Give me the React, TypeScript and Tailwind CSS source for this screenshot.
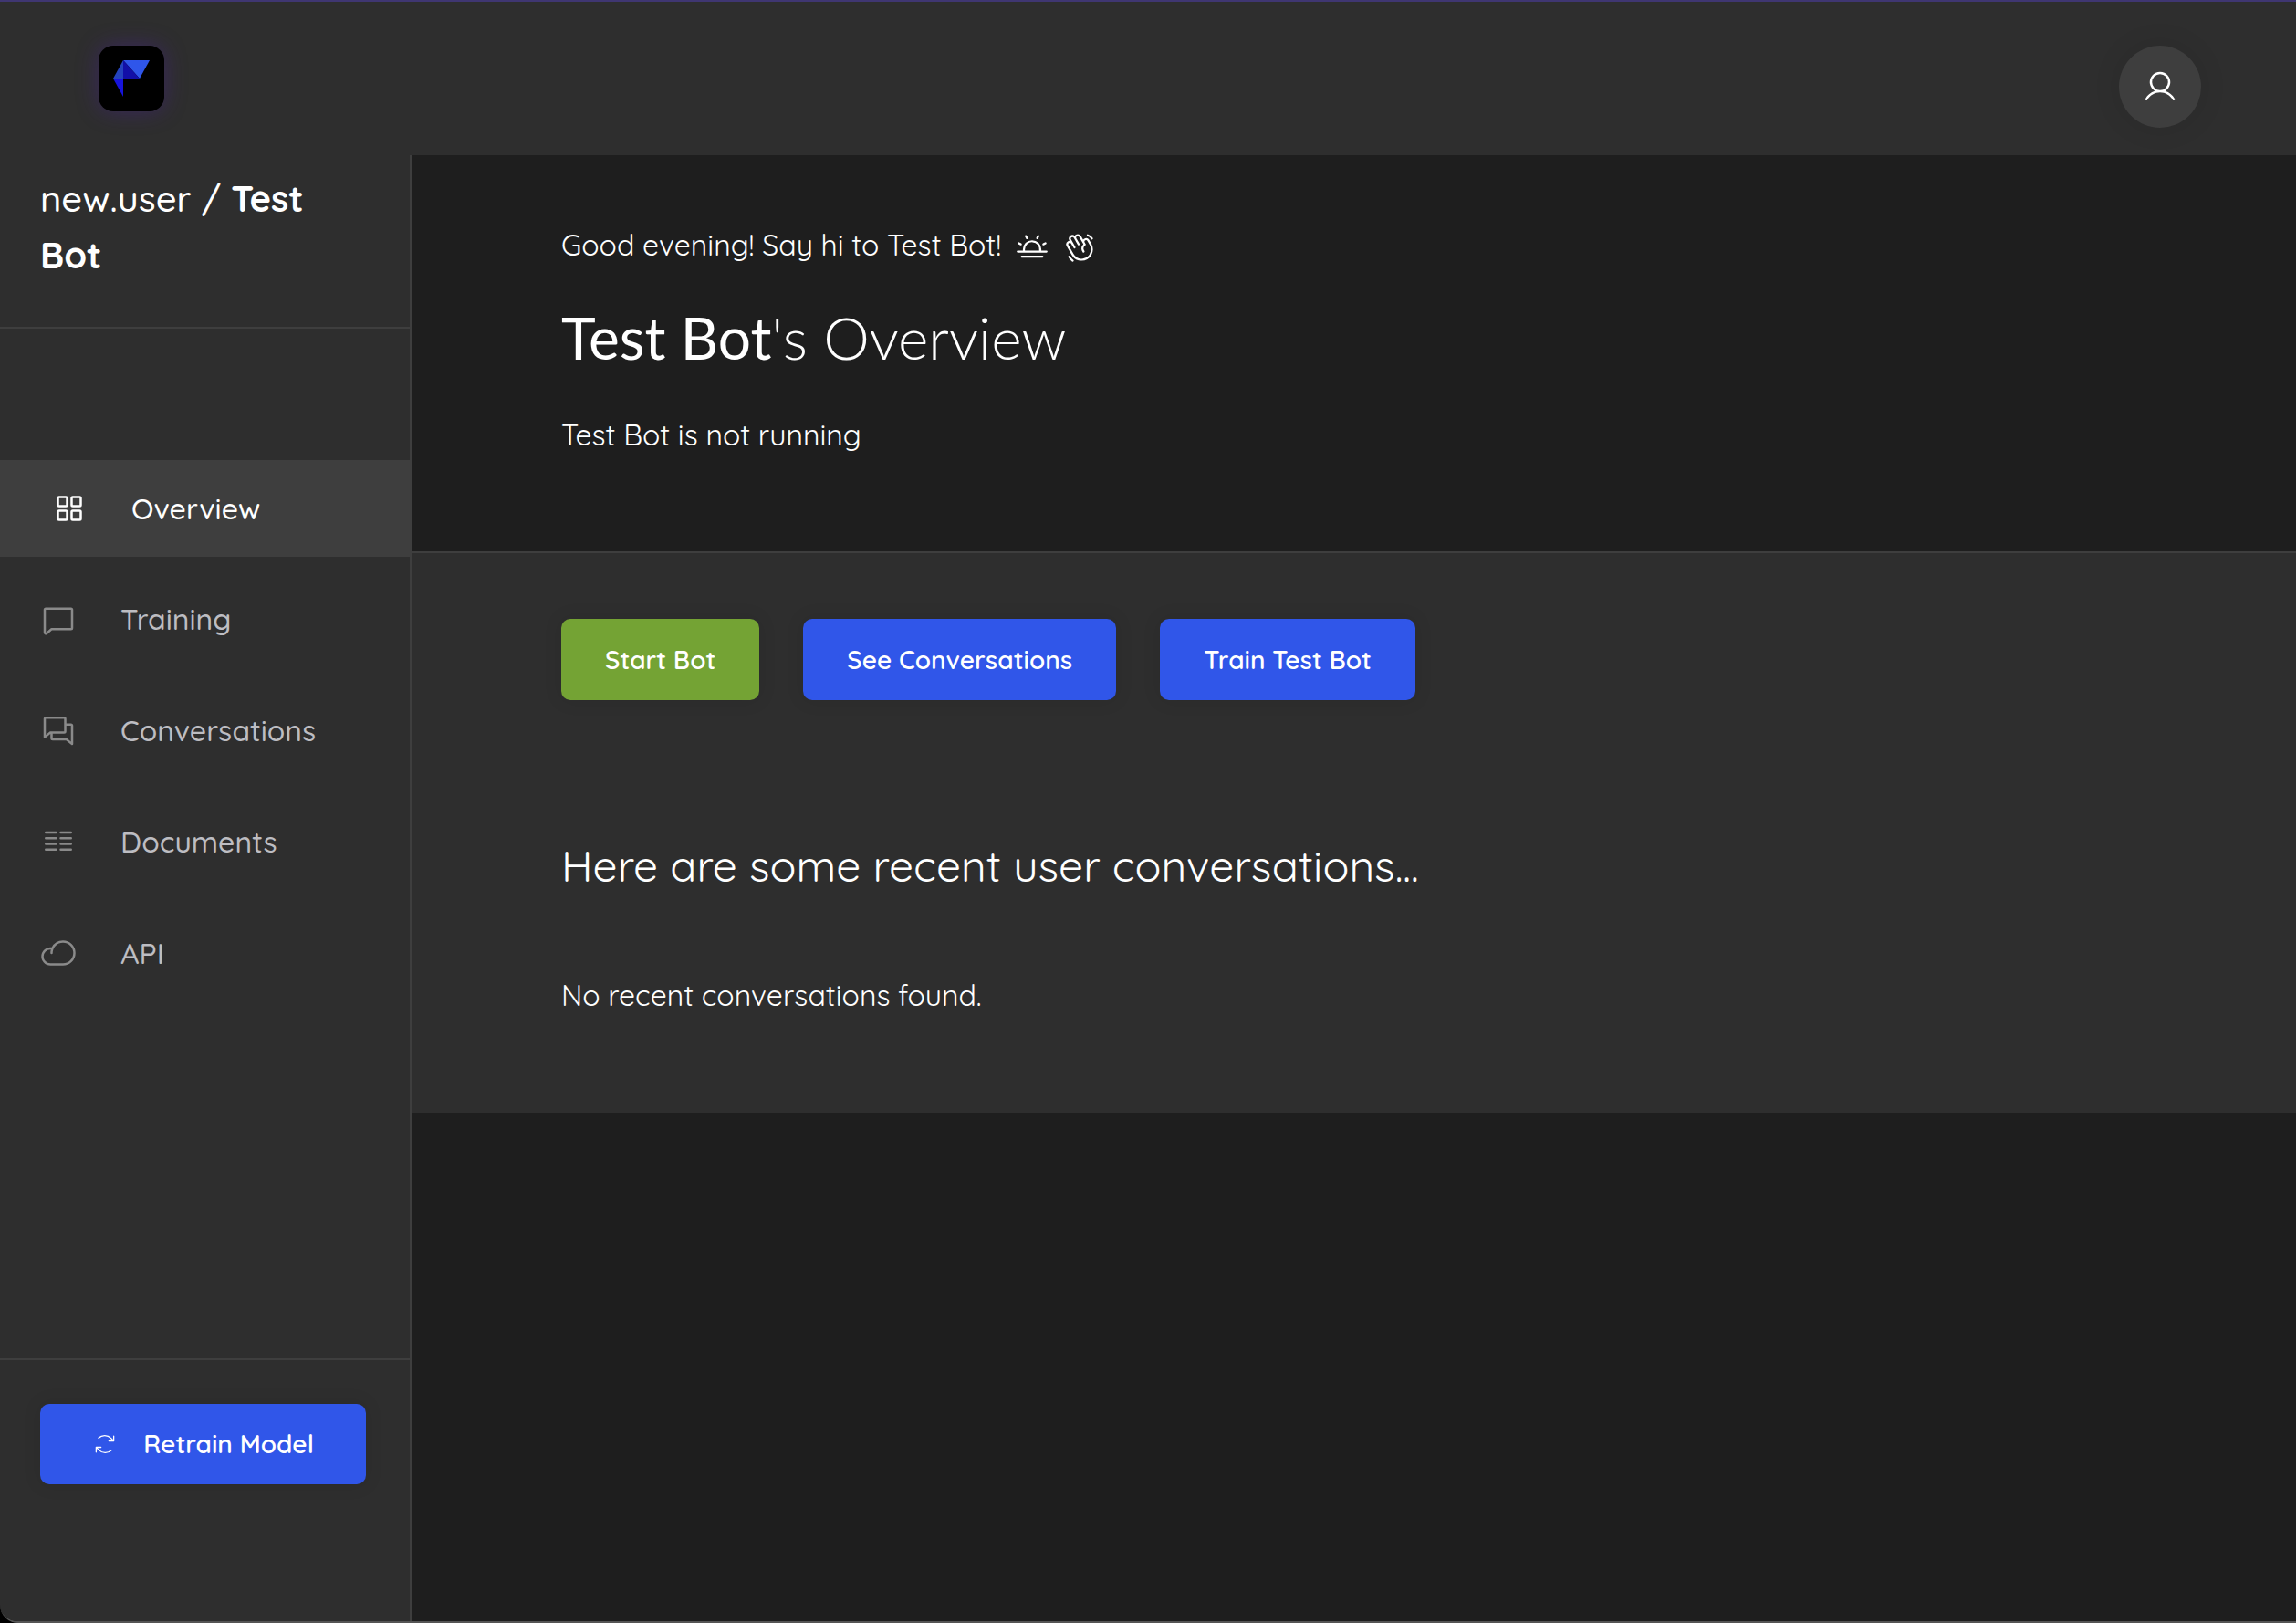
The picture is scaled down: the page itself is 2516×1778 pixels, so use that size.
import React from "react";
import {
  PiArrowsClockwiseLight,
  PiChat,
  PiChats,
  PiCloud,
  PiHandWaving,
  PiSquaresFour,
  PiSunHorizon,
  PiTextColumns,
  PiUser,
} from "react-icons/pi";

const navItems = [
  { label: "Training", Icon: PiChat },
  { label: "Conversations", Icon: PiChats },
  { label: "Documents", Icon: PiTextColumns },
  { label: "API", Icon: PiCloud },
];

function Logo() {
  return (
    <a
      href="#"
      aria-label="Home"
      className="block size-[72px] rounded-2xl bg-black shadow-[0_0_24px_rgba(70,30,150,0.45)]"
    >
      <svg viewBox="0 0 72 72" className="size-full" aria-hidden="true">
        <path d="M27 16 L56 16 L45 36 Z" fill="#2f56ea" />
        <path d="M27 16 L45 36 L27 36 Z" fill="#120fa8" />
        <path d="M27 16 L27 36 L16 36 Z" fill="#2443bd" />
        <path d="M16 36 L27 36 L27 56 Z" fill="#1714dc" />
      </svg>
    </a>
  );
}

function ActionButton({ label, className }: { label: string; className: string }) {
  return (
    <button
      type="button"
      className={`h-[89px] rounded-[10px] px-12 text-[28px] font-semibold text-white shadow-[0_0_20px_rgba(0,0,0,0.1)] ${className}`}
    >
      {label}
    </button>
  );
}

export default function App() {
  return (
    <div className="bg-black font-['Quicksand','Lato',sans-serif] text-white">
      <div className="flex min-h-screen flex-col overflow-hidden rounded-bl-[20px] border-t-2 border-b-2 border-t-[#3f3672] border-b-[#555555] bg-[#1e1e1e]">
        <header className="flex h-[168px] items-start justify-between bg-[#2e2e2e] pt-12 pr-[104px] pl-[108px]">
          <Logo />
          <button
            type="button"
            aria-label="Account"
            className="flex size-[90px] items-center justify-center rounded-full bg-[#3e3e3e] shadow-[0_0_30px_rgba(0,0,0,0.1)]"
          >
            <PiUser className="size-10" />
          </button>
        </header>

        <div className="flex flex-1">
          <aside className="flex w-[451px] shrink-0 flex-col border-r-2 border-[#3e3e3e] bg-[#2e2e2e]">
            <p className="h-[190px] border-b-2 border-[#3e3e3e] pt-4 pr-20 pl-11 text-[40px] leading-[62px] font-medium">
              new.user / <strong className="font-bold">Test Bot</strong>
            </p>
            <nav className="mt-36 text-[32px] font-medium">
              <a href="#overview" aria-current="page" className="flex h-[106px] items-center gap-12 bg-[#3e3e3e] pl-14">
                <PiSquaresFour className="size-10" />
                Overview
              </a>
              <div className="mt-[15px] flex flex-col gap-4">
                {navItems.map(({ label, Icon }) => (
                  <a
                    key={label}
                    href={`#${label.toLowerCase()}`}
                    className="flex h-[106px] items-center gap-12 pl-11 text-[#bdbdc2]"
                  >
                    <Icon className="size-10 text-[#8a8a8a]" />
                    {label}
                  </a>
                ))}
              </div>
            </nav>
            <div className="mt-auto h-[288px] border-t-2 border-[#3e3e3e] px-11 pt-12">
              <button
                type="button"
                className="flex h-[88px] w-[357px] items-center justify-center gap-7 rounded-[10px] bg-[#3056e9] text-[28px] font-semibold shadow-[0_0_20px_rgba(0,0,0,0.1)]"
              >
                <PiArrowsClockwiseLight className="size-7" />
                Retrain Model
              </button>
            </div>
          </aside>

          <main className="flex-1">
            <section className="h-[436px] border-b-2 border-[#3e3e3e] px-[164px] pt-[72px]">
              <p className="flex items-center gap-4 text-[32px] leading-[52px]">
                Good evening! Say hi to Test Bot!
                <span className="flex gap-4 pt-1.5">
                  <PiSunHorizon className="size-9" />
                  <PiHandWaving className="size-9" />
                </span>
              </p>
              <h1 className="mt-7 font-['Lato'] text-[64px] leading-[96px] font-light">
                <span className="font-normal">Test Bot</span>'s Overview
              </h1>
              <p className="mt-8 text-[32px] leading-[52px]">Test Bot is not running</p>
            </section>
            <section className="h-[613px] bg-[#2e2e2e] px-[164px] pt-[72px]">
              <div className="flex gap-12">
                <ActionButton label="Start Bot" className="bg-[#74a334]" />
                <ActionButton label="See Conversations" className="bg-[#3056e9]" />
                <ActionButton label="Train Test Bot" className="bg-[#3056e9]" />
              </div>
              <h2 className="mt-[143px] text-[48px] leading-[76px]">
                Here are some recent user conversations...
              </h2>
              <p className="mt-[78px] text-[32px] leading-[52px]">No recent conversations found.</p>
            </section>
          </main>
        </div>
      </div>
    </div>
  );
}
